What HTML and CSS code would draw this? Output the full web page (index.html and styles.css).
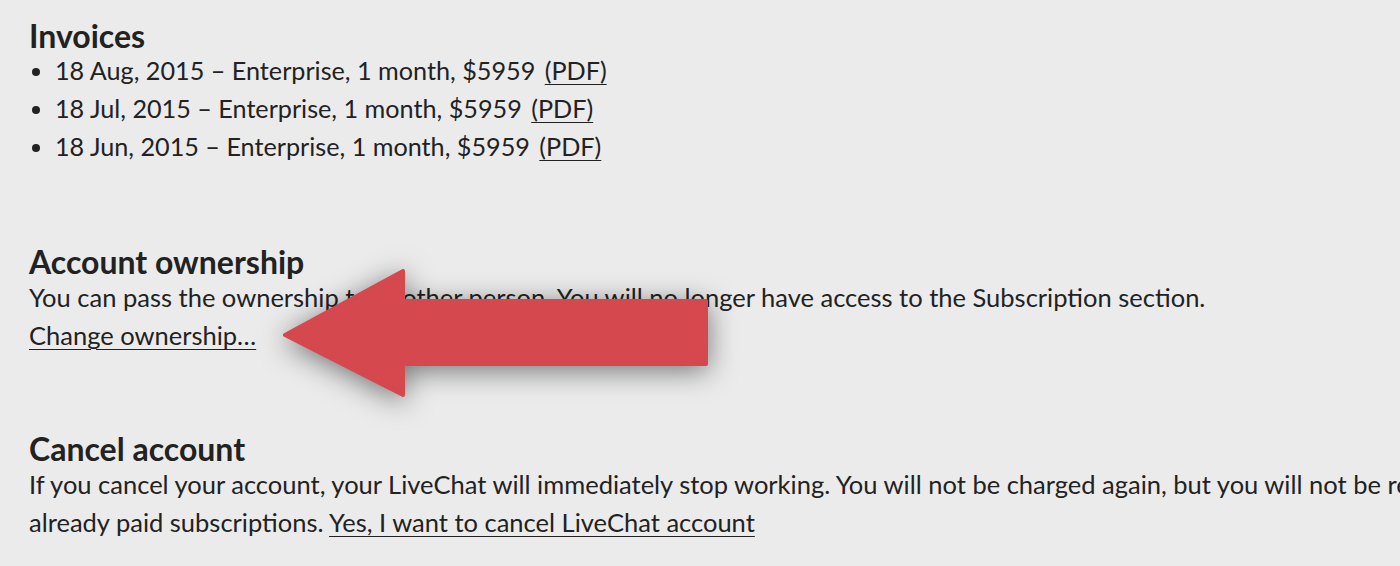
FILE: index.html
```html
<!DOCTYPE html>
<html>
<head>
<meta charset="utf-8">
<link rel="stylesheet" href="styles.css">
</head>
<body>
<div class="page">
  <section class="section invoices">
    <h2 class="title">Invoices</h2>
    <ul class="list">
      <li>18 Aug, 2015 – Enterprise, 1 month, $5959 <a class="pdf" href="#">(PDF)</a></li>
      <li>18 Jul, 2015 – Enterprise, 1 month, $5959 <a class="pdf" href="#">(PDF)</a></li>
      <li>18 Jun, 2015 – Enterprise, 1 month, $5959 <a class="pdf" href="#">(PDF)</a></li>
    </ul>
  </section>
  <section class="section ownership">
    <h2 class="title">Account ownership</h2>
    <p class="text">You can pass the ownership to another person. You will no longer have access to the Subscription section.</p>
    <p class="text"><a href="#">Change ownership…</a></p>
  </section>
  <section class="section cancel">
    <h2 class="title">Cancel account</h2>
    <p class="text">If you cancel your account, your LiveChat will immediately stop working. You will not be charged again, but you will not be refunded for already paid subscriptions. <a href="#">Yes, I want to cancel LiveChat account</a></p>
  </section>
</div>
<svg class="arrow" width="1400" height="566" viewBox="0 0 1400 566">
  <polygon points="285,335 403,271 403,301 706,301 706,364 403,364 403,395" />
</svg>
</body>
</html>
```
FILE: styles.css
```css
html, body {
  margin: 0;
  padding: 0;
  background: #ebebeb;
  overflow: hidden;
  width: 1400px;
  height: 566px;
}
body {
  font-family: Lato, "Open Sans", sans-serif;
  color: #222;
  position: relative;
}
.page {
  width: 1575px;
  padding: 20px 0 0 29px;
}
.section {
  margin: 0;
}
.title {
  font-size: 32px;
  font-weight: 700;
  line-height: 32px;
  margin: 0;
}
.list {
  margin: -1px 0 0 0;
  padding: 0 0 0 26px;
  font-size: 25.2px;
  line-height: 38px;
}
.pdf {
  margin-left: 3px;
}
.text {
  margin: 0;
  font-size: 25.5px;
  line-height: 38px;
}
a {
  color: #222;
  text-decoration: underline;
  text-underline-offset: 4px;
  text-decoration-thickness: 1px;
}
.ownership {
  margin-top: 81px;
}
.cancel {
  margin-top: 79px;
}
.arrow {
  position: absolute;
  left: 0;
  top: 0;
  pointer-events: none;
}
.arrow polygon {
  fill: #d5484e;
  stroke: #d5484e;
  stroke-width: 4;
  stroke-linejoin: round;
  filter: drop-shadow(0 5px 14px rgba(0,0,0,0.5));
}
```
